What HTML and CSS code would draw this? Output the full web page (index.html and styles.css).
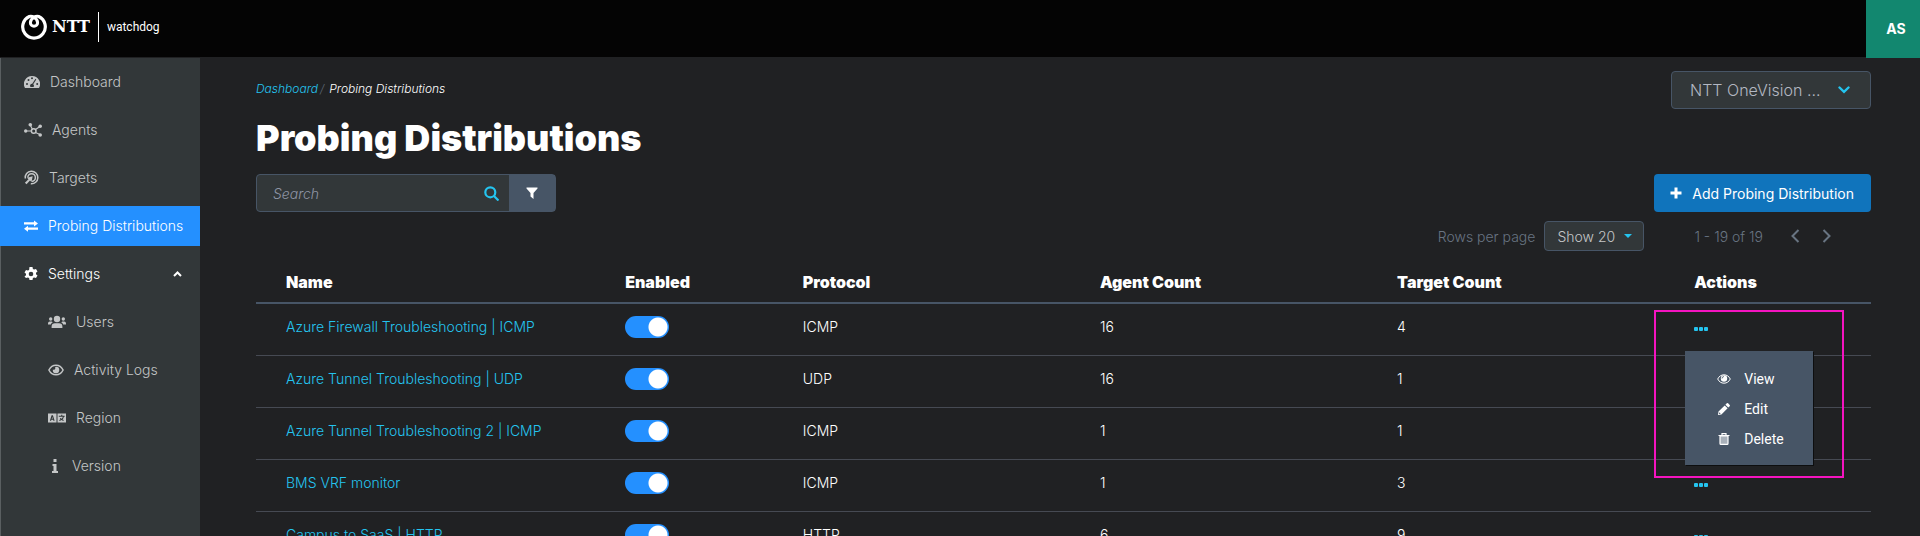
FILE: index.html
```html
<!DOCTYPE html>
<html lang="en">
<head>
  <meta charset="UTF-8">
  <meta name="viewport" content="width=device-width, initial-scale=1.0">
  <title>Probing Distributions - watchdog</title>
  <link rel="stylesheet" href="styles.css">
</head>
<body>

<header class="topbar">
  <a class="brand" href="#">
    <svg class="brand-mark" viewBox="0 0 26 26" width="26" height="26">
      <g fill="none" stroke="#fff">
        <path d="M13 3.200C10.500 1.800 8.300 2.500 8.300 2.500A11.300 11.300 0 1 0 17.700 2.500S15.500 1.800 13 3.200" stroke-width="3.200"/>
        <path d="M13 3.200C10.800 4.500 9.400 6.300 9.400 8.700a3.600 3.600 0 0 0 7.200 0C16.600 6.300 15.200 4.500 13 3.200z" stroke-width="3"/>
      </g>
    </svg>
    <span class="brand-name">NTT</span>
    <span class="brand-product">watchdog</span>
  </a>
  <button class="avatar" type="button">AS</button>
</header>

<div class="layout">
  <nav class="sidebar">
    <a class="nav-item" href="#">
      <svg viewBox="0 0 16 16" width="16" height="16"><path fill="currentColor" fill-rule="evenodd" d="M8 2a8 8 0 0 0-7 12h14A8 8 0 0 0 8 2zM8 3.200a1 1 0 1 1 0 2 1 1 0 0 1 0-2zM3 9a1 1 0 1 1 0 2 1 1 0 0 1 0-2zM4.500 5a1 1 0 1 1 0 2 1 1 0 0 1 0-2zM13.200 9a1 1 0 1 1 0 2 1 1 0 0 1 0-2zM11.500 4.800l.8.600-3.100 4.800A2 2 0 0 1 9.400 13H6.600a2 2 0 0 1 1.600-3.300z"/></svg>
      Dashboard
    </a>
    <a class="nav-item" href="#">
      <svg viewBox="0 0 18 14" width="18" height="14"><g fill="none" stroke="currentColor"><path d="M2 8h5M6.500 2.500l2 4M11.500 6.500L16 3.500M11.500 9.500l4.500 2" stroke-width="1.200"/><circle cx="9.700" cy="8" r="2.300" stroke-width="1.500"/></g><g fill="currentColor"><circle cx="1.700" cy="8" r="1.700"/><circle cx="6.300" cy="1.800" r="1.800"/><circle cx="16.200" cy="3.300" r="1.800"/><circle cx="16.200" cy="12" r="1.800"/></g></svg>
      Agents
    </a>
    <a class="nav-item" href="#">
      <svg viewBox="0 0 15 15" width="15" height="15"><g fill="none" stroke="currentColor" stroke-width="1.500"><path d="M1.300 8.500a6.300 6.300 0 1 1 5.500 5.300"/><path d="M3.800 7.500a3.800 3.800 0 1 1 4 3.900"/></g><path fill="currentColor" d="M8.700 6.300L7.500 12 6 10.600l-3.500 3.700-1.600-1.500L4.500 9.200 3 7.800z"/></svg>
      Targets
    </a>
    <a class="nav-item nav-item-active" href="#">
      <svg viewBox="0 0 14 12" width="14" height="12"><path fill="currentColor" d="M0 2.300h10V.4L14 3.400l-4 3V4.500H0zM14 7.600H4V5.700L0 8.700l4 3V9.800h10z"/></svg>
      Probing Distributions
    </a>
    <button class="nav-item nav-item-open" type="button">
      <svg viewBox="0 0 14 14" width="14" height="14"><path fill="currentColor" fill-rule="evenodd" d="M5.500 0h3l.4 1.900 1.200.7 1.900-.7 1.500 2.600-1.500 1.300v1.400l1.500 1.300-1.500 2.600-1.900-.7-1.200.7-.4 1.900h-3l-.4-1.900-1.200-.7-1.900.7L.5 9.500 2 8.200V6.800L.5 5.500 2 2.900l1.900.7 1.200-.7zM7 4.700a2.300 2.300 0 1 0 0 4.600 2.300 2.300 0 0 0 0-4.600z"/></svg>
      Settings
      <svg class="nav-caret" viewBox="0 0 9 6" width="9" height="6"><path d="M1 5l3.500-3.500L8 5" fill="none" stroke="currentColor" stroke-width="2"/></svg>
    </button>
    <div class="subnav">
      <a class="nav-item" href="#">
        <svg viewBox="0 0 18 14" width="18" height="14"><g fill="currentColor"><circle cx="9" cy="4" r="3.200"/><circle cx="2.700" cy="4" r="1.700"/><circle cx="15.300" cy="4" r="1.700"/><path d="M3.600 13v-1.500A3.400 3.400 0 0 1 7 8.200h4a3.400 3.400 0 0 1 3.400 3.300V13zM0 9.500V8.400a1.800 1.800 0 0 1 1.800-1.800h1.800l1.200.6C3.700 7.800 3 8.600 2.800 9.500zM18 9.500V8.400a1.800 1.800 0 0 0-1.800-1.800h-1.800l-1.200.6c1.100.6 1.800 1.400 2 2.300z"/></g></svg>
        Users
      </a>
      <a class="nav-item" href="#">
        <svg viewBox="0 0 16 12" width="16" height="12"><path d="M.9 6C2.400 3 5 1.200 8 1.200S13.600 3 15.100 6C13.600 9 11 10.800 8 10.800S2.400 9 .9 6z" fill="none" stroke="currentColor" stroke-width="1.500"/><path d="M8 2.800A3.200 3.200 0 1 1 4.900 5.400a1.600 1.600 0 0 0 2.200-2.200z" fill="currentColor"/></svg>
        Activity Logs
      </a>
      <a class="nav-item" href="#">
        <svg viewBox="0 0 18 10" width="18" height="10"><path fill="currentColor" fill-rule="evenodd" d="M0 .5h8.500v9H0zM9.500 .5H18v9H9.500zM3.600 2.300L1.900 7.800h1.200l.3-1h1.700l.3 1h1.200L4.900 2.300zM4.250 3.800l.5 2h-1zM13.200 1.800v1h-2.400v1h4.100c-.3.900-.8 1.500-1.400 2l-.9-.9-.8.600.7.900-1.300.6.400 1 1.900-.9 1.800.9.500-1-1.300-.6c.7-.7 1.200-1.500 1.400-2.600h.8v-1h-2.400v-1z"/></svg>
        Region
      </a>
      <a class="nav-item" href="#">
        <svg viewBox="0 0 6 14" width="14" height="14"><path fill="currentColor" d="M1.500 0h3v3h-3zM.5 5h4v7H6v2H0v-2h1.500V7h-1z"/></svg>
        Version
      </a>
    </div>
  </nav>

  <main class="content">
    <div class="page-head">
      <div>
        <nav class="breadcrumb">
          <a href="#">Dashboard</a><span class="breadcrumb-sep">/</span><span>Probing Distributions</span>
        </nav>
        <h1 class="title">Probing Distributions</h1>
      </div>
      <div class="tenant">
        <select class="tenant-select" aria-label="Tenant">
          <option>NTT OneVision ...</option>
        </select>
        <svg class="select-icon" viewBox="0 0 12 8" width="12" height="8"><path d="M1.500 1.500L6 5.800l4.500-4.300" fill="none" stroke="#24c4ef" stroke-width="2.400" stroke-linecap="round"/></svg>
      </div>
    </div>

    <div class="toolbar">
      <form class="search">
        <input class="search-input" type="text" placeholder="Search" aria-label="Search">
        <button class="search-button" type="button" aria-label="Search">
          <svg viewBox="0 0 15 15" width="15" height="15"><g fill="none" stroke="#24c4ef" stroke-width="2.200"><circle cx="6.300" cy="6.300" r="5"/><path d="M10 10l4.500 4.500"/></g></svg>
        </button>
        <button class="filter-button" type="button" aria-label="Filter">
          <svg viewBox="0 0 12 12" width="12" height="12"><path fill="#fff" d="M.5.5h11v1L7.500 6v6l-3-2.500V6L.5 1.500z"/></svg>
        </button>
      </form>
      <button class="add-button" type="button">
        <svg viewBox="0 0 12 12" width="12" height="12"><path d="M6 .5v11M.5 6h11" stroke="#fff" stroke-width="3"/></svg>
        Add Probing Distribution
      </button>
    </div>

    <div class="pager">
      <label for="rows">Rows per page</label>
      <div class="rows">
        <select class="rows-select" id="rows">
          <option>Show 20</option>
        </select>
        <svg class="select-icon" viewBox="0 0 8 4" width="8" height="4"><path fill="#24c4ef" d="M0 0h8L4 4z"/></svg>
      </div>
      <span class="range">1 - 19 of 19</span>
      <button class="page-button" type="button" aria-label="Previous page">
        <svg viewBox="0 0 9 14" width="9" height="14"><path d="M7.500 1L1.500 7l6 6" fill="none" stroke="currentColor" stroke-width="2"/></svg>
      </button>
      <button class="page-button" type="button" aria-label="Next page">
        <svg viewBox="0 0 9 14" width="9" height="14"><path d="M1.500 1l6 6-6 6" fill="none" stroke="currentColor" stroke-width="2"/></svg>
      </button>
    </div>

    <table class="probes">
      <thead>
        <tr>
          <th class="col-name">Name</th>
          <th class="col-enabled">Enabled</th>
          <th class="col-wide">Protocol</th>
          <th class="col-wide">Agent Count</th>
          <th class="col-wide">Target Count</th>
          <th>Actions</th>
        </tr>
      </thead>
      <tbody>
        <tr>
          <td><a href="#">Azure Firewall Troubleshooting | ICMP</a></td>
          <td><input class="switch" type="checkbox" aria-label="Enabled" checked></td>
          <td>ICMP</td>
          <td>16</td>
          <td>4</td>
          <td>
            <div class="actions">
              <button class="more" type="button" aria-label="Actions"><i></i><i></i><i></i></button>
              <div class="highlight"></div>
              <div class="menu">
                <button class="menu-item" type="button">
                  <svg viewBox="0 0 14 10" width="14" height="10"><path d="M.7 5C2 2.300 4.300 .8 7 .8S12 2.300 13.300 5C12 7.700 9.700 9.200 7 9.200S2 7.700 .7 5z" fill="none" stroke="#fff"/><circle cx="7" cy="4.500" r="3.200" fill="#fff"/><path d="M5 4.500a2 2 0 0 1 2-2" fill="none" stroke="#475566" stroke-width=".8"/></svg>
                  View
                </button>
                <button class="menu-item" type="button">
                  <svg viewBox="0 0 14 12" width="14" height="12"><path fill="#fff" d="M9.800.3q.7-.5 1.300 0l1.600 1.600q.5.700 0 1.300l-1.400 1.400-2.900-2.900zM7.700 2.400l2.900 2.900-6.200 6.200L1 12l.5-3.400zM2.300 9.300l-.3 1.700 1.700-.3z"/></svg>
                  Edit
                </button>
                <button class="menu-item" type="button">
                  <svg viewBox="0 0 14 12" width="14" height="12"><path d="M3 3v7.500q0 .9.900.9h6.200q.9 0 .9-.9V3z" fill="#a9b1ba" stroke="#fff" stroke-width="1.200"/><path d="M1.500 2.500h11M5 2V.6h4V2" fill="none" stroke="#fff" stroke-width="1.200"/></svg>
                  Delete
                </button>
              </div>
            </div>
          </td>
        </tr>
        <tr>
          <td><a href="#">Azure Tunnel Troubleshooting | UDP</a></td>
          <td><input class="switch" type="checkbox" aria-label="Enabled" checked></td>
          <td>UDP</td>
          <td>16</td>
          <td>1</td>
          <td></td>
        </tr>
        <tr>
          <td><a href="#">Azure Tunnel Troubleshooting 2 | ICMP</a></td>
          <td><input class="switch" type="checkbox" aria-label="Enabled" checked></td>
          <td>ICMP</td>
          <td>1</td>
          <td>1</td>
          <td></td>
        </tr>
        <tr>
          <td><a href="#">BMS VRF monitor</a></td>
          <td><input class="switch" type="checkbox" aria-label="Enabled" checked></td>
          <td>ICMP</td>
          <td>1</td>
          <td>3</td>
          <td><button class="more" type="button" aria-label="Actions"><i></i><i></i><i></i></button></td>
        </tr>
        <tr>
          <td><a href="#">Campus to SaaS | HTTP</a></td>
          <td><input class="switch" type="checkbox" aria-label="Enabled" checked></td>
          <td>HTTP</td>
          <td>6</td>
          <td>9</td>
          <td><button class="more" type="button" aria-label="Actions"><i></i><i></i><i></i></button></td>
        </tr>
      </tbody>
    </table>
  </main>
</div>

</body>
</html>
```
FILE: styles.css
```css
* {
  box-sizing: border-box;
}
body {
  margin: 0;
  height: 100vh;
  display: flex;
  flex-direction: column;
  overflow: hidden;
  background: #202123;
  color: #fff;
  font-family: Inter, sans-serif;
  font-size: 14px;
  font-weight: 300;
}
a {
  color: #24c4ef;
  text-decoration: none;
}
button, input, select {
  margin: 0;
  padding: 0;
  border: 0;
  background: none;
  color: inherit;
  font: inherit;
}
button {
  cursor: pointer;
}
svg {
  flex: none;
  display: block;
}

/* top bar */
.topbar {
  flex: none;
  display: flex;
  justify-content: space-between;
  height: 58px;
  background: #040404;
  border-bottom: 1px solid #202123;
}
.brand {
  display: flex;
  align-items: center;
  padding: 0 0 4px 21px;
  color: #fff;
}
.brand-name {
  margin: 0 8px 0 5px;
  font-family: "DejaVu Serif", serif;
  font-size: 16px;
  font-weight: bold;
}
.brand-product {
  padding-left: 8px;
  border-left: 1px solid #fff;
  font-family: Roboto, sans-serif;
  font-size: 12px;
  font-weight: 400;
  line-height: 30px;
}
.avatar {
  width: 54px;
  height: 58px;
  padding: 0 0 2px 6px;
  background: #12876f;
  font-weight: 700;
}

/* sidebar */
.layout {
  flex: 1;
  display: flex;
  min-height: 0;
}
.sidebar {
  flex: none;
  width: 200px;
  padding-top: 4px;
  background: linear-gradient(90deg, #5a5f61 1px, #323739 1px);
}
.nav-item {
  display: flex;
  align-items: center;
  gap: 10px;
  width: 100%;
  height: 40px;
  margin-bottom: 8px;
  padding: 0 0 1px 24px;
  color: #c4c6c7;
}
.nav-item-active {
  background: #2490ff;
  color: #fff;
}
.nav-item-open {
  color: #fff;
}
.nav-caret {
  margin: 0 18px 0 auto;
}
.subnav .nav-item {
  padding-left: 48px;
}

/* content */
.content {
  flex: 1;
  min-width: 0;
  padding: 13px 49px 0 56px;
}
.page-head {
  display: flex;
  justify-content: space-between;
  align-items: flex-start;
}
.breadcrumb {
  display: flex;
  padding-top: 10px;
  font-size: 12px;
  font-style: italic;
  line-height: 16px;
}
.breadcrumb-sep {
  margin: 0 5px 0 2px;
  color: #5d6875;
}
.title {
  margin: 20px 0 15px;
  font-size: 36px;
  font-weight: 900;
  line-height: 42px;
}
.tenant, .rows {
  position: relative;
}
.tenant-select, .rows-select {
  display: block;
  appearance: none;
  background: #323739;
  border: 1px solid #475566;
  border-radius: 4px;
}
.tenant-select {
  width: 200px;
  height: 38px;
  padding-left: 18px;
  color: #b3b7c2;
  font-size: 16px;
}
.select-icon {
  position: absolute;
  top: 50%;
  right: 21px;
  transform: translateY(-50%);
  pointer-events: none;
}

.toolbar {
  display: flex;
  justify-content: space-between;
}
.search {
  display: flex;
  width: 300px;
  height: 38px;
  background: #323739;
  border: 1px solid #475566;
  border-radius: 4px;
}
.search-input {
  flex: 1;
  min-width: 0;
  padding-left: 16px;
  outline: 0;
}
.search-input::placeholder {
  color: #8f95a5;
  font-style: italic;
}
.search-button {
  padding: 0 10px;
}
.filter-button {
  display: grid;
  place-items: center;
  width: 46px;
  background: #475566;
}
.add-button {
  display: flex;
  align-items: center;
  gap: 10px;
  height: 38px;
  padding: 0 17px 0 16px;
  background: #1074bc;
  border-radius: 4px;
  font-weight: 400;
}

.pager {
  display: flex;
  align-items: center;
  justify-content: flex-end;
  margin-top: 9px;
  padding-right: 34px;
  color: #687482;
}
.rows {
  margin: 0 50px 0 9px;
}
.rows-select {
  width: 100px;
  height: 30px;
  padding-left: 12px;
  color: #c4c6c7;
}
.rows .select-icon {
  right: 12px;
}
.range {
  margin-right: 12px;
}
.page-button {
  margin-left: 10px;
  padding: 0 6px;
}

/* table */
.probes {
  width: 100%;
  margin-top: 10px;
  border-collapse: collapse;
  table-layout: fixed;
}
.probes th {
  height: 42px;
  padding: 0 0 0 30px;
  border-bottom: 2px solid #475566;
  font-size: 16px;
  font-weight: 900;
  text-align: left;
}
.probes td {
  height: 52px;
  padding: 0 0 5px 30px;
  border-bottom: 1px solid #464a53;
}
.col-name {
  width: 21%;
}
.col-enabled {
  width: 11%;
}
.col-wide {
  width: 18.4%;
}
.switch {
  display: block;
  appearance: none;
  width: 44px;
  height: 22px;
  border-radius: 11px;
  background: radial-gradient(circle at 33px 11px, #fff 9px, #2490ff 10px);
}
.more {
  display: flex;
  gap: 1px;
  padding-top: 4px;
}
.more i {
  width: 4px;
  height: 4px;
  border-radius: 1px;
  background: #24c4ef;
}

/* row menu */
.actions {
  position: relative;
}
.highlight {
  position: absolute;
  top: -13px;
  left: -40px;
  width: 190px;
  height: 168px;
  border: 2px solid #f514c0;
  pointer-events: none;
}
.menu {
  position: absolute;
  top: 28px;
  left: -9px;
  width: 128px;
  padding: 13px 0 11px;
  background: #475566;
  box-shadow: 1px 1px 0 #0d0e0f;
}
.menu-item {
  display: flex;
  align-items: center;
  gap: 13px;
  width: 100%;
  height: 30px;
  padding-left: 32px;
  font-family: Roboto, sans-serif;
  font-weight: 400;
}
```
